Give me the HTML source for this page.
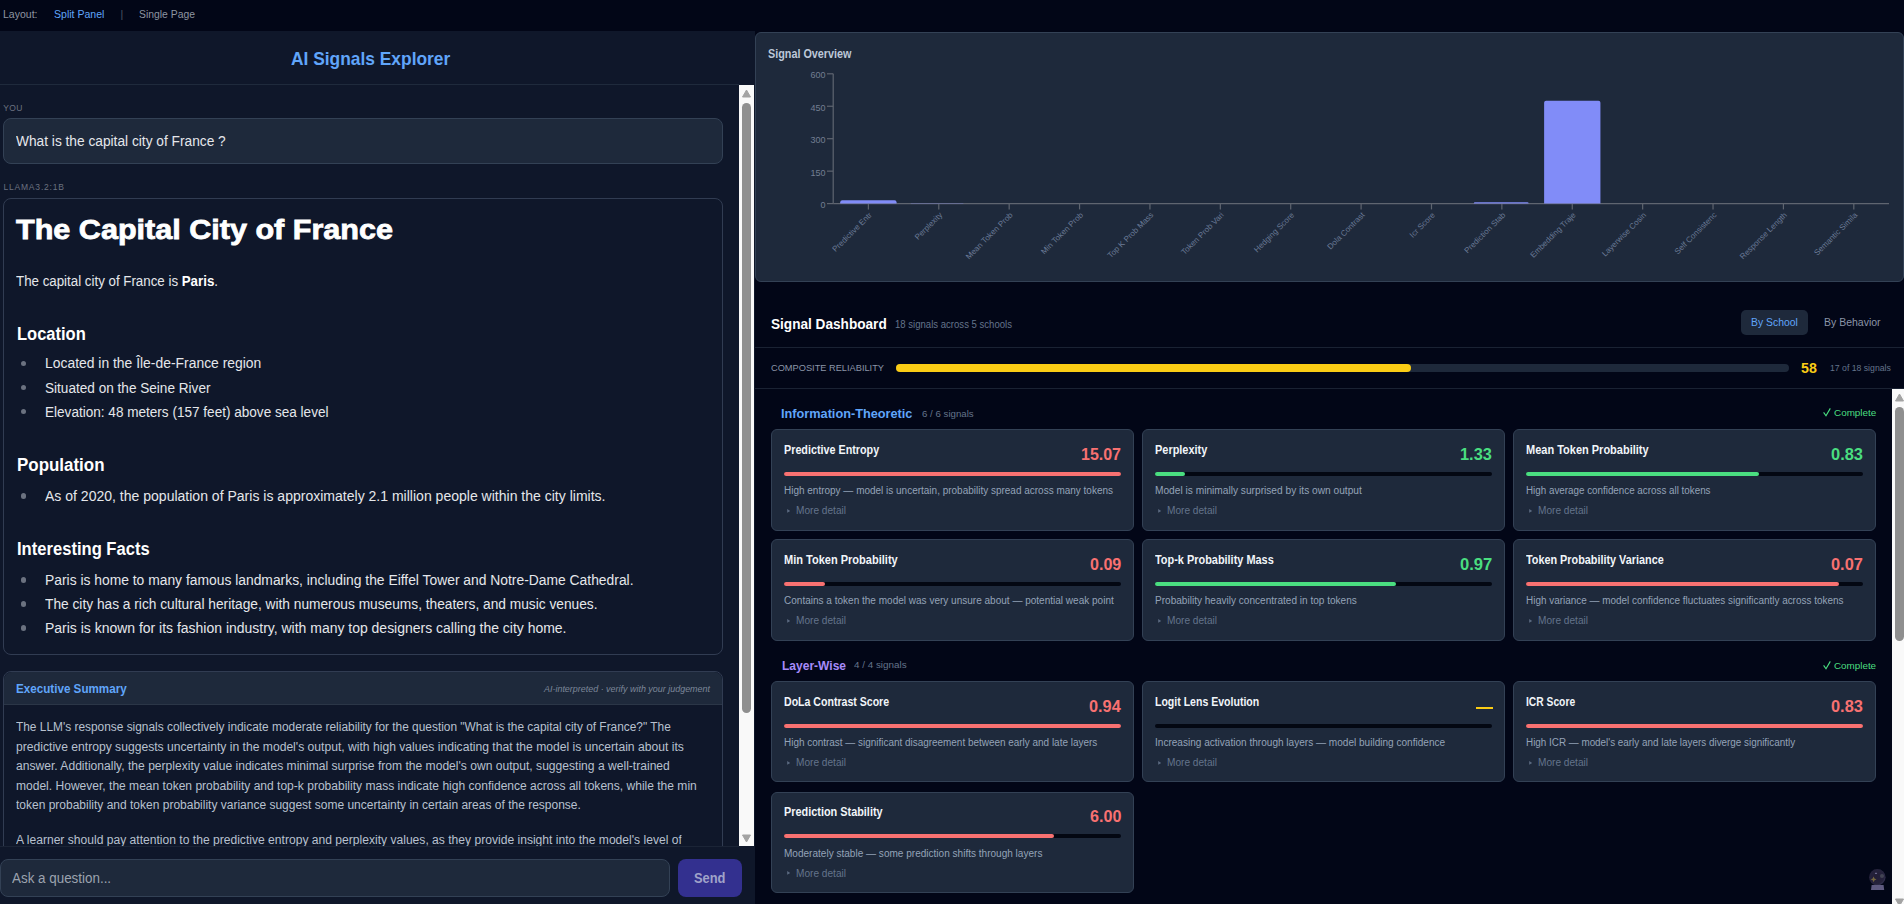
<!DOCTYPE html><html><head><meta charset="utf-8"><style>html,body{margin:0;padding:0}body{width:1904px;height:904px;overflow:hidden;position:relative;background:#020617;font-family:"Liberation Sans", sans-serif}.t{position:absolute;white-space:nowrap;transform-origin:0 50%}</style></head><body><div style="position:absolute;left:0px;top:0px;width:1904px;height:31px;background:#020617"></div><div style="position:absolute;left:0px;top:31px;width:755px;height:873px;background:#0f172a"></div><div style="position:absolute;left:0px;top:84px;width:739px;height:1px;background:#1f2a3c"></div><div style="position:absolute;left:3px;top:118px;width:720px;height:46px;background:#1e293b;border:1px solid #334155;border-radius:8px;box-sizing:border-box"></div><div style="position:absolute;left:3px;top:198px;width:720px;height:457px;border:1px solid #313c52;border-radius:8px;box-sizing:border-box"></div><div style="position:absolute;left:20.7px;top:360.8px;width:5.5px;height:5.5px;background:#6b7280;border-radius:50%"></div><div style="position:absolute;left:20.7px;top:384.90000000000003px;width:5.5px;height:5.5px;background:#6b7280;border-radius:50%"></div><div style="position:absolute;left:20.7px;top:408.90000000000003px;width:5.5px;height:5.5px;background:#6b7280;border-radius:50%"></div><div style="position:absolute;left:20.7px;top:493.1px;width:5.5px;height:5.5px;background:#6b7280;border-radius:50%"></div><div style="position:absolute;left:20.7px;top:577.1px;width:5.5px;height:5.5px;background:#6b7280;border-radius:50%"></div><div style="position:absolute;left:20.7px;top:601.1px;width:5.5px;height:5.5px;background:#6b7280;border-radius:50%"></div><div style="position:absolute;left:20.7px;top:625.1px;width:5.5px;height:5.5px;background:#6b7280;border-radius:50%"></div><div style="position:absolute;left:0;top:85px;width:739px;height:761px;overflow:hidden"><div style="position:absolute;left:3px;top:586px;width:720px;height:300px;border:1px solid #313c52;border-radius:8px;box-sizing:border-box;background:#0f172a"><div style="height:32px;background:#1e293b;border-bottom:1px solid #2b3647;border-radius:8px 8px 0 0"></div></div></div><div style="position:absolute;left:739px;top:85px;width:15px;height:761px;background:#f9f9f9"></div><svg style="position:absolute;left:739px;top:85px" width="15" height="761"><path d="M7.5 5 L11.5 12 L3.5 12 Z" fill="#a3a3a3" stroke="#a3a3a3" stroke-width="1" stroke-linejoin="round"/><rect x="3" y="18" width="9" height="610" rx="4.5" fill="#8f8f8f"/><path d="M3.5 750 L11.5 750 L7.5 757 Z" fill="#a3a3a3" stroke="#a3a3a3" stroke-width="1" stroke-linejoin="round"/></svg><div style="position:absolute;left:0px;top:859px;width:670px;height:38px;background:#1e293b;border:1px solid #334155;border-radius:8px;box-sizing:border-box"></div><div style="position:absolute;left:0px;top:846px;width:739px;height:1px;background:#1b2436"></div><div style="position:absolute;left:678px;top:859px;width:64px;height:38px;background:#33308f;border-radius:8px"></div><div style="position:absolute;left:755px;top:31px;width:1149px;height:873px;background:#020617"></div><div style="position:absolute;left:755px;top:32px;width:1149px;height:250px;background:#1e293b;border:1px solid #334155;border-radius:6px;box-sizing:border-box"></div><svg style="position:absolute;left:0;top:0" width="1904" height="290" viewBox="0 0 1904 290"><line x1="833.2" y1="73.7" x2="833.2" y2="203.6" stroke="#5f6570" stroke-width="1.2"/><line x1="827" y1="203.60" x2="833.2" y2="203.60" stroke="#5f6570" stroke-width="1.2"/><text x="825.5" y="208.20" text-anchor="end" font-family='"Liberation Sans", sans-serif' font-size="9" fill="#737e92">0</text><line x1="827" y1="171.15" x2="833.2" y2="171.15" stroke="#5f6570" stroke-width="1.2"/><text x="825.5" y="175.75" text-anchor="end" font-family='"Liberation Sans", sans-serif' font-size="9" fill="#737e92">150</text><line x1="827" y1="138.70" x2="833.2" y2="138.70" stroke="#5f6570" stroke-width="1.2"/><text x="825.5" y="143.30" text-anchor="end" font-family='"Liberation Sans", sans-serif' font-size="9" fill="#737e92">300</text><line x1="827" y1="106.25" x2="833.2" y2="106.25" stroke="#5f6570" stroke-width="1.2"/><text x="825.5" y="110.85" text-anchor="end" font-family='"Liberation Sans", sans-serif' font-size="9" fill="#737e92">450</text><line x1="827" y1="73.80" x2="833.2" y2="73.80" stroke="#5f6570" stroke-width="1.2"/><text x="825.5" y="78.40" text-anchor="end" font-family='"Liberation Sans", sans-serif' font-size="9" fill="#737e92">600</text><line x1="833.2" y1="203.6" x2="1889" y2="203.6" stroke="#5f6570" stroke-width="1.2"/><line x1="868.39" y1="203.6" x2="868.39" y2="209.4" stroke="#5f6570" stroke-width="1.2"/><path d="M840.24 203.6 v-1.26 q0 -2.00 2.00 -2.00 h52.31 q2.00 0 2.00 2.00 v1.26 z" fill="#818cf8"/><text transform="translate(872.39 215.5) rotate(-45)" text-anchor="end" font-family='"Liberation Sans", sans-serif' font-size="8" fill="#6a7a96">Predictive Entr</text><line x1="938.78" y1="203.6" x2="938.78" y2="209.4" stroke="#5f6570" stroke-width="1.2"/><path d="M910.63 203.6 v0.00 q0 -0.29 0.29 -0.29 h52.31 q0.29 0 0.29 0.29 v0.00 z" fill="#818cf8"/><text transform="translate(942.78 215.5) rotate(-45)" text-anchor="end" font-family='"Liberation Sans", sans-serif' font-size="8" fill="#6a7a96">Perplexity</text><line x1="1009.17" y1="203.6" x2="1009.17" y2="209.4" stroke="#5f6570" stroke-width="1.2"/><path d="M981.01 203.6 v0.00 q0 -0.18 0.18 -0.18 h52.31 q0.18 0 0.18 0.18 v0.00 z" fill="#818cf8"/><text transform="translate(1013.17 215.5) rotate(-45)" text-anchor="end" font-family='"Liberation Sans", sans-serif' font-size="8" fill="#6a7a96">Mean Token Prob</text><line x1="1079.55" y1="203.6" x2="1079.55" y2="209.4" stroke="#5f6570" stroke-width="1.2"/><text transform="translate(1083.55 215.5) rotate(-45)" text-anchor="end" font-family='"Liberation Sans", sans-serif' font-size="8" fill="#6a7a96">Min Token Prob</text><line x1="1149.94" y1="203.6" x2="1149.94" y2="209.4" stroke="#5f6570" stroke-width="1.2"/><path d="M1121.79 203.6 v0.00 q0 -0.21 0.21 -0.21 h52.31 q0.21 0 0.21 0.21 v0.00 z" fill="#818cf8"/><text transform="translate(1153.94 215.5) rotate(-45)" text-anchor="end" font-family='"Liberation Sans", sans-serif' font-size="8" fill="#6a7a96">Top K Prob Mass</text><line x1="1220.33" y1="203.6" x2="1220.33" y2="209.4" stroke="#5f6570" stroke-width="1.2"/><text transform="translate(1224.33 215.5) rotate(-45)" text-anchor="end" font-family='"Liberation Sans", sans-serif' font-size="8" fill="#6a7a96">Token Prob Vari</text><line x1="1290.71" y1="203.6" x2="1290.71" y2="209.4" stroke="#5f6570" stroke-width="1.2"/><text transform="translate(1294.71 215.5) rotate(-45)" text-anchor="end" font-family='"Liberation Sans", sans-serif' font-size="8" fill="#6a7a96">Hedging Score</text><line x1="1361.10" y1="203.6" x2="1361.10" y2="209.4" stroke="#5f6570" stroke-width="1.2"/><path d="M1332.95 203.6 v0.00 q0 -0.20 0.20 -0.20 h52.31 q0.20 0 0.20 0.20 v0.00 z" fill="#818cf8"/><text transform="translate(1365.10 215.5) rotate(-45)" text-anchor="end" font-family='"Liberation Sans", sans-serif' font-size="8" fill="#6a7a96">Dola Contrast</text><line x1="1431.49" y1="203.6" x2="1431.49" y2="209.4" stroke="#5f6570" stroke-width="1.2"/><path d="M1403.33 203.6 v0.00 q0 -0.18 0.18 -0.18 h52.31 q0.18 0 0.18 0.18 v0.00 z" fill="#818cf8"/><text transform="translate(1435.49 215.5) rotate(-45)" text-anchor="end" font-family='"Liberation Sans", sans-serif' font-size="8" fill="#6a7a96">Icr Score</text><line x1="1501.87" y1="203.6" x2="1501.87" y2="209.4" stroke="#5f6570" stroke-width="1.2"/><path d="M1473.72 203.6 v0.00 q0 -1.30 1.30 -1.30 h52.31 q1.30 0 1.30 1.30 v0.00 z" fill="#818cf8"/><text transform="translate(1505.87 215.5) rotate(-45)" text-anchor="end" font-family='"Liberation Sans", sans-serif' font-size="8" fill="#6a7a96">Prediction Stab</text><line x1="1572.26" y1="203.6" x2="1572.26" y2="209.4" stroke="#5f6570" stroke-width="1.2"/><path d="M1544.11 203.6 v-100.76 q0 -2.00 2.00 -2.00 h52.31 q2.00 0 2.00 2.00 v100.76 z" fill="#818cf8"/><text transform="translate(1576.26 215.5) rotate(-45)" text-anchor="end" font-family='"Liberation Sans", sans-serif' font-size="8" fill="#6a7a96">Embedding Traje</text><line x1="1642.65" y1="203.6" x2="1642.65" y2="209.4" stroke="#5f6570" stroke-width="1.2"/><text transform="translate(1646.65 215.5) rotate(-45)" text-anchor="end" font-family='"Liberation Sans", sans-serif' font-size="8" fill="#6a7a96">Layerwise Cosin</text><line x1="1713.03" y1="203.6" x2="1713.03" y2="209.4" stroke="#5f6570" stroke-width="1.2"/><text transform="translate(1717.03 215.5) rotate(-45)" text-anchor="end" font-family='"Liberation Sans", sans-serif' font-size="8" fill="#6a7a96">Self Consistenc</text><line x1="1783.42" y1="203.6" x2="1783.42" y2="209.4" stroke="#5f6570" stroke-width="1.2"/><text transform="translate(1787.42 215.5) rotate(-45)" text-anchor="end" font-family='"Liberation Sans", sans-serif' font-size="8" fill="#6a7a96">Response Length</text><line x1="1853.81" y1="203.6" x2="1853.81" y2="209.4" stroke="#5f6570" stroke-width="1.2"/><text transform="translate(1857.81 215.5) rotate(-45)" text-anchor="end" font-family='"Liberation Sans", sans-serif' font-size="8" fill="#6a7a96">Semantic Simila</text></svg><div style="position:absolute;left:1741px;top:310px;width:67px;height:25px;background:#1e293b;border-radius:5px"></div><div style="position:absolute;left:755px;top:347px;width:1149px;height:1px;background:#1a2233"></div><div style="position:absolute;left:896px;top:364px;width:893px;height:8px;background:#1e293b;border-radius:4px"></div><div style="position:absolute;left:896px;top:364px;width:515px;height:8px;background:#facc15;border-radius:4px"></div><div style="position:absolute;left:755px;top:388px;width:1149px;height:1px;background:#1a2233"></div><svg style="position:absolute;left:1822px;top:407px" width="10" height="10"><path d="M1.6 5.4 L4 8.8 L8.3 1.4" fill="none" stroke="#4ade80" stroke-width="1.1"/></svg><svg style="position:absolute;left:1822px;top:660.4px" width="10" height="10"><path d="M1.6 5.4 L4 8.8 L8.3 1.4" fill="none" stroke="#4ade80" stroke-width="1.1"/></svg><div style="position:absolute;left:771px;top:429.3px;width:363px;height:101.30000000000001px;background:#1e293b;border:1px solid #334155;border-radius:6px;box-sizing:border-box"></div><div style="position:absolute;left:784px;top:471.8px;width:337px;height:4.199999999999989px;background:#030712;border-radius:2px"></div><div style="position:absolute;left:784px;top:471.8px;width:337.0px;height:4.199999999999989px;background:#f87171;border-radius:2px"></div><svg style="position:absolute;left:785.5px;top:507.0px" width="6" height="8"><path d="M1.2 2 L4.2 3.9 L1.2 5.8 Z" fill="#5b6a80"/></svg><div style="position:absolute;left:1142px;top:429.3px;width:363px;height:101.30000000000001px;background:#1e293b;border:1px solid #334155;border-radius:6px;box-sizing:border-box"></div><div style="position:absolute;left:1155px;top:471.8px;width:337px;height:4.199999999999989px;background:#030712;border-radius:2px"></div><div style="position:absolute;left:1155px;top:471.8px;width:30.0px;height:4.199999999999989px;background:#4ade80;border-radius:2px"></div><svg style="position:absolute;left:1156.5px;top:507.0px" width="6" height="8"><path d="M1.2 2 L4.2 3.9 L1.2 5.8 Z" fill="#5b6a80"/></svg><div style="position:absolute;left:1513px;top:429.3px;width:363px;height:101.30000000000001px;background:#1e293b;border:1px solid #334155;border-radius:6px;box-sizing:border-box"></div><div style="position:absolute;left:1526px;top:471.8px;width:337px;height:4.199999999999989px;background:#030712;border-radius:2px"></div><div style="position:absolute;left:1526px;top:471.8px;width:233.0px;height:4.199999999999989px;background:#4ade80;border-radius:2px"></div><svg style="position:absolute;left:1527.5px;top:507.0px" width="6" height="8"><path d="M1.2 2 L4.2 3.9 L1.2 5.8 Z" fill="#5b6a80"/></svg><div style="position:absolute;left:771px;top:539.3px;width:363px;height:101.29999999999995px;background:#1e293b;border:1px solid #334155;border-radius:6px;box-sizing:border-box"></div><div style="position:absolute;left:784px;top:581.8px;width:337px;height:4.2000000000000455px;background:#030712;border-radius:2px"></div><div style="position:absolute;left:784px;top:581.8px;width:41.0px;height:4.2000000000000455px;background:#f87171;border-radius:2px"></div><svg style="position:absolute;left:785.5px;top:617.0px" width="6" height="8"><path d="M1.2 2 L4.2 3.9 L1.2 5.8 Z" fill="#5b6a80"/></svg><div style="position:absolute;left:1142px;top:539.3px;width:363px;height:101.29999999999995px;background:#1e293b;border:1px solid #334155;border-radius:6px;box-sizing:border-box"></div><div style="position:absolute;left:1155px;top:581.8px;width:337px;height:4.2000000000000455px;background:#030712;border-radius:2px"></div><div style="position:absolute;left:1155px;top:581.8px;width:241.0px;height:4.2000000000000455px;background:#4ade80;border-radius:2px"></div><svg style="position:absolute;left:1156.5px;top:617.0px" width="6" height="8"><path d="M1.2 2 L4.2 3.9 L1.2 5.8 Z" fill="#5b6a80"/></svg><div style="position:absolute;left:1513px;top:539.3px;width:363px;height:101.29999999999995px;background:#1e293b;border:1px solid #334155;border-radius:6px;box-sizing:border-box"></div><div style="position:absolute;left:1526px;top:581.8px;width:337px;height:4.2000000000000455px;background:#030712;border-radius:2px"></div><div style="position:absolute;left:1526px;top:581.8px;width:312.70000000000005px;height:4.2000000000000455px;background:#f87171;border-radius:2px"></div><svg style="position:absolute;left:1527.5px;top:617.0px" width="6" height="8"><path d="M1.2 2 L4.2 3.9 L1.2 5.8 Z" fill="#5b6a80"/></svg><div style="position:absolute;left:771px;top:681px;width:363px;height:101.29999999999995px;background:#1e293b;border:1px solid #334155;border-radius:6px;box-sizing:border-box"></div><div style="position:absolute;left:784px;top:723.5px;width:337px;height:4.2000000000000455px;background:#030712;border-radius:2px"></div><div style="position:absolute;left:784px;top:723.5px;width:337.0px;height:4.2000000000000455px;background:#f87171;border-radius:2px"></div><svg style="position:absolute;left:785.5px;top:758.7px" width="6" height="8"><path d="M1.2 2 L4.2 3.9 L1.2 5.8 Z" fill="#5b6a80"/></svg><div style="position:absolute;left:1142px;top:681px;width:363px;height:101.29999999999995px;background:#1e293b;border:1px solid #334155;border-radius:6px;box-sizing:border-box"></div><div style="position:absolute;left:1476px;top:706.5px;width:16.5px;height:2.5px;background:#facc15"></div><div style="position:absolute;left:1155px;top:723.5px;width:337px;height:4.2000000000000455px;background:#030712;border-radius:2px"></div><svg style="position:absolute;left:1156.5px;top:758.7px" width="6" height="8"><path d="M1.2 2 L4.2 3.9 L1.2 5.8 Z" fill="#5b6a80"/></svg><div style="position:absolute;left:1513px;top:681px;width:363px;height:101.29999999999995px;background:#1e293b;border:1px solid #334155;border-radius:6px;box-sizing:border-box"></div><div style="position:absolute;left:1526px;top:723.5px;width:337px;height:4.2000000000000455px;background:#030712;border-radius:2px"></div><div style="position:absolute;left:1526px;top:723.5px;width:337.0px;height:4.2000000000000455px;background:#f87171;border-radius:2px"></div><svg style="position:absolute;left:1527.5px;top:758.7px" width="6" height="8"><path d="M1.2 2 L4.2 3.9 L1.2 5.8 Z" fill="#5b6a80"/></svg><div style="position:absolute;left:771px;top:791.6px;width:363px;height:101.29999999999995px;background:#1e293b;border:1px solid #334155;border-radius:6px;box-sizing:border-box"></div><div style="position:absolute;left:784px;top:834.1px;width:337px;height:4.199999999999932px;background:#030712;border-radius:2px"></div><div style="position:absolute;left:784px;top:834.1px;width:269.5999999999999px;height:4.199999999999932px;background:#f87171;border-radius:2px"></div><svg style="position:absolute;left:785.5px;top:869.3px" width="6" height="8"><path d="M1.2 2 L4.2 3.9 L1.2 5.8 Z" fill="#5b6a80"/></svg><div style="position:absolute;left:1892px;top:389px;width:15px;height:521px;background:#f9f9f9"></div><svg style="position:absolute;left:1892px;top:389px" width="15" height="521"><path d="M7.5 5 L11.5 12 L3.5 12 Z" fill="#a3a3a3" stroke="#a3a3a3" stroke-width="1" stroke-linejoin="round"/><rect x="3" y="18" width="9" height="234" rx="4.5" fill="#8f8f8f"/><path d="M3.5 510 L11.5 510 L7.5 517 Z" fill="#a3a3a3" stroke="#a3a3a3" stroke-width="1" stroke-linejoin="round"/></svg><svg style="position:absolute;left:1866px;top:866px" width="24" height="26"><defs><radialGradient id="cb" cx="0.45" cy="0.45" r="0.6"><stop offset="0" stop-color="#221d35"/><stop offset="0.75" stop-color="#25223c"/><stop offset="1" stop-color="#3a3858"/></radialGradient></defs><circle cx="11.3" cy="11.3" r="8.2" fill="url(#cb)"/><circle cx="16" cy="10" r="2" fill="#4a4e5a" opacity="0.8"/><path d="M5.6 19 h12 l0.6 5 h-13.2 z" fill="#5e5a80"/><path d="M7.6 10.5 l0.9 2 l2 0.9 l-2 0.9 l-0.9 2 l-0.9 -2 l-2 -0.9 l2 -0.9 z" fill="#75673f"/><path d="M10 6.2 l1.2 1.8 h-2.4 z" fill="#7c7aa0"/></svg><div class="t" style="left:3.30px;top:9.01px;font-size:10.5px;line-height:10.5px;color:#8e95a1;font-weight:400;transform:scaleX(1.0014);">Layout:</div><div class="t" style="left:53.80px;top:9.01px;font-size:10.5px;line-height:10.5px;color:#60a5fa;font-weight:400;transform:scaleX(1.0039);">Split Panel</div><div class="t" style="left:120.50px;top:9.01px;font-size:10.5px;line-height:10.5px;color:#4b5563;font-weight:400;">|</div><div class="t" style="left:139.00px;top:9.01px;font-size:10.5px;line-height:10.5px;color:#8e95a1;font-weight:400;transform:scaleX(0.9887);">Single Page</div><div class="t" style="left:290.75px;top:49.42px;font-size:19px;line-height:19px;color:#60a5fa;font-weight:700;transform:scaleX(0.9140);">AI Signals Explorer</div><div class="t" style="left:3.30px;top:103.70px;font-size:8.5px;line-height:8.5px;color:#6b7280;font-weight:400;letter-spacing:0.289px;">YOU</div><div class="t" style="left:16.30px;top:134.05px;font-size:14px;line-height:14px;color:#e5e7eb;font-weight:400;transform:scaleX(0.9800);">What is the capital city of France ?</div><div class="t" style="left:3.40px;top:183.20px;font-size:8.5px;line-height:8.5px;color:#6b7280;font-weight:400;letter-spacing:0.815px;">LLAMA3.2:1B</div><div class="t" style="left:16.00px;top:215.80px;font-size:28px;line-height:28px;color:#ffffff;font-weight:700;transform:scaleX(1.0915);-webkit-text-stroke:0.8px #fff;">The Capital City of France</div><div class="t" style="left:16.00px;top:273.65px;font-size:14px;line-height:14px;color:#e5e7eb;font-weight:400;transform:scaleX(0.9509);">The capital city of France is <b style="color:#fff">Paris</b>.</div><div class="t" style="left:16.60px;top:324.86px;font-size:18px;line-height:18px;color:#ffffff;font-weight:700;transform:scaleX(0.9173);">Location</div><div class="t" style="left:44.50px;top:356.45px;font-size:14px;line-height:14px;color:#e5e7eb;font-weight:400;transform:scaleX(0.9926);">Located in the Île-de-France region</div><div class="t" style="left:44.50px;top:380.55px;font-size:14px;line-height:14px;color:#e5e7eb;font-weight:400;transform:scaleX(0.9709);">Situated on the Seine River</div><div class="t" style="left:44.50px;top:404.55px;font-size:14px;line-height:14px;color:#e5e7eb;font-weight:400;transform:scaleX(0.9688);">Elevation: 48 meters (157 feet) above sea level</div><div class="t" style="left:16.50px;top:455.76px;font-size:18px;line-height:18px;color:#ffffff;font-weight:700;transform:scaleX(0.9409);">Population</div><div class="t" style="left:44.50px;top:488.75px;font-size:14px;line-height:14px;color:#e5e7eb;font-weight:400;transform:scaleX(1.0018);">As of 2020, the population of Paris is approximately 2.1 million people within the city limits.</div><div class="t" style="left:16.50px;top:540.16px;font-size:18px;line-height:18px;color:#ffffff;font-weight:700;transform:scaleX(0.9212);">Interesting Facts</div><div class="t" style="left:44.50px;top:572.75px;font-size:14px;line-height:14px;color:#e5e7eb;font-weight:400;transform:scaleX(0.9895);">Paris is home to many famous landmarks, including the Eiffel Tower and Notre-Dame Cathedral.</div><div class="t" style="left:44.50px;top:596.75px;font-size:14px;line-height:14px;color:#e5e7eb;font-weight:400;transform:scaleX(0.9807);">The city has a rich cultural heritage, with numerous museums, theaters, and music venues.</div><div class="t" style="left:44.50px;top:620.75px;font-size:14px;line-height:14px;color:#e5e7eb;font-weight:400;transform:scaleX(0.9978);">Paris is known for its fashion industry, with many top designers calling the city home.</div><div class="t" style="left:16.20px;top:683.32px;font-size:12.5px;line-height:12.5px;color:#60a5fa;font-weight:700;transform:scaleX(0.9317);">Executive Summary</div><div class="t" style="left:544.00px;top:683.86px;font-size:9.5px;line-height:9.5px;color:#7c8799;font-weight:400;font-style:italic;transform:scaleX(0.9413);">AI-interpreted · verify with your judgement</div><div class="t" style="left:16.20px;top:721.32px;font-size:12.5px;line-height:12.5px;color:#b8c1cf;font-weight:400;transform:scaleX(0.9511);">The LLM&#x27;s response signals collectively indicate moderate reliability for the question &quot;What is the capital city of France?&quot; The</div><div class="t" style="left:16.20px;top:740.82px;font-size:12.5px;line-height:12.5px;color:#b8c1cf;font-weight:400;transform:scaleX(0.9704);">predictive entropy suggests uncertainty in the model&#x27;s output, with high values indicating that the model is uncertain about its</div><div class="t" style="left:16.20px;top:760.32px;font-size:12.5px;line-height:12.5px;color:#b8c1cf;font-weight:400;transform:scaleX(0.9670);">answer. Additionally, the perplexity value indicates minimal surprise from the model&#x27;s own output, suggesting a well-trained</div><div class="t" style="left:16.20px;top:779.82px;font-size:12.5px;line-height:12.5px;color:#b8c1cf;font-weight:400;transform:scaleX(0.9634);">model. However, the mean token probability and top-k probability mass indicate high confidence across all tokens, while the min</div><div class="t" style="left:16.20px;top:799.32px;font-size:12.5px;line-height:12.5px;color:#b8c1cf;font-weight:400;transform:scaleX(0.9597);">token probability and token probability variance suggest some uncertainty in certain areas of the response.</div><div class="t" style="left:16.20px;top:833.82px;font-size:12.5px;line-height:12.5px;color:#b8c1cf;font-weight:400;transform:scaleX(0.9674);height:12.18px;overflow:hidden;line-height:12.5px;">A learner should pay attention to the predictive entropy and perplexity values, as they provide insight into the model&#x27;s level of</div><div class="t" style="left:12.10px;top:871.05px;font-size:14px;line-height:14px;color:#9ca3af;font-weight:400;transform:scaleX(0.9573);">Ask a question...</div><div class="t" style="left:694.00px;top:871.05px;font-size:14px;line-height:14px;color:#a0a3c9;font-weight:700;transform:scaleX(0.9201);">Send</div><div class="t" style="left:768.00px;top:47.94px;font-size:12px;line-height:12px;color:#bcc7d8;font-weight:700;transform:scaleX(0.9006);">Signal Overview</div><div class="t" style="left:770.70px;top:317.03px;font-size:14.5px;line-height:14.5px;color:#ffffff;font-weight:700;transform:scaleX(0.9385);">Signal Dashboard</div><div class="t" style="left:895.00px;top:320.13px;font-size:10px;line-height:10px;color:#64748b;font-weight:400;transform:scaleX(0.9567);">18 signals across 5 schools</div><div class="t" style="left:1751.00px;top:317.09px;font-size:11px;line-height:11px;color:#60a5fa;font-weight:400;transform:scaleX(0.9449);">By School</div><div class="t" style="left:1824.40px;top:317.09px;font-size:11px;line-height:11px;color:#8b95a8;font-weight:400;transform:scaleX(0.9543);">By Behavior</div><div class="t" style="left:771.00px;top:363.26px;font-size:9.5px;line-height:9.5px;color:#8b95a8;font-weight:400;transform:scaleX(0.9730);">COMPOSITE RELIABILITY</div><div class="t" style="left:1801.40px;top:360.85px;font-size:14px;line-height:14px;color:#facc15;font-weight:700;transform:scaleX(1.0142);">58</div><div class="t" style="left:1830.00px;top:363.06px;font-size:9.5px;line-height:9.5px;color:#64748b;font-weight:400;transform:scaleX(0.9136);">17 of 18 signals</div><div class="t" style="left:781.40px;top:408.02px;font-size:12.5px;line-height:12.5px;color:#60a5fa;font-weight:700;transform:scaleX(1.0172);">Information-Theoretic</div><div class="t" style="left:921.80px;top:408.56px;font-size:9.5px;line-height:9.5px;color:#64748b;font-weight:400;transform:scaleX(1.0197);">6 / 6 signals</div><div class="t" style="left:1833.70px;top:407.86px;font-size:9.5px;line-height:9.5px;color:#4ade80;font-weight:400;transform:scaleX(1.0400);">Complete</div><div class="t" style="left:781.50px;top:659.52px;font-size:12.5px;line-height:12.5px;color:#a78bfa;font-weight:700;transform:scaleX(0.9611);">Layer-Wise</div><div class="t" style="left:853.60px;top:660.36px;font-size:9.5px;line-height:9.5px;color:#64748b;font-weight:400;transform:scaleX(1.0374);">4 / 4 signals</div><div class="t" style="left:1833.70px;top:661.26px;font-size:9.5px;line-height:9.5px;color:#4ade80;font-weight:400;transform:scaleX(1.0351);">Complete</div><div class="t" style="left:784.20px;top:444.14px;font-size:12px;line-height:12px;color:#f1f5f9;font-weight:700;transform:scaleX(0.8978);">Predictive Entropy</div><div class="t" style="left:1081.00px;top:446.86px;font-size:16px;line-height:16px;color:#f87171;font-weight:700;transform:scaleX(0.9988);">15.07</div><div class="t" style="left:784.20px;top:486.44px;font-size:10px;line-height:10px;color:#94a3b8;font-weight:400;transform:scaleX(0.9982);">High entropy — model is uncertain, probability spread across many tokens</div><div class="t" style="left:795.60px;top:506.44px;font-size:10px;line-height:10px;color:#64748b;font-weight:400;transform:scaleX(1.0107);">More detail</div><div class="t" style="left:1155.20px;top:444.14px;font-size:12px;line-height:12px;color:#f1f5f9;font-weight:700;transform:scaleX(0.9115);">Perplexity</div><div class="t" style="left:1460.20px;top:446.86px;font-size:16px;line-height:16px;color:#4ade80;font-weight:700;transform:scaleX(1.0212);">1.33</div><div class="t" style="left:1155.20px;top:486.44px;font-size:10px;line-height:10px;color:#94a3b8;font-weight:400;transform:scaleX(1.0166);">Model is minimally surprised by its own output</div><div class="t" style="left:1166.60px;top:506.44px;font-size:10px;line-height:10px;color:#64748b;font-weight:400;transform:scaleX(1.0107);">More detail</div><div class="t" style="left:1526.20px;top:444.14px;font-size:12px;line-height:12px;color:#f1f5f9;font-weight:700;transform:scaleX(0.9162);">Mean Token Probability</div><div class="t" style="left:1831.00px;top:446.86px;font-size:16px;line-height:16px;color:#4ade80;font-weight:700;transform:scaleX(1.0276);">0.83</div><div class="t" style="left:1526.20px;top:486.44px;font-size:10px;line-height:10px;color:#94a3b8;font-weight:400;transform:scaleX(0.9820);">High average confidence across all tokens</div><div class="t" style="left:1537.60px;top:506.44px;font-size:10px;line-height:10px;color:#64748b;font-weight:400;transform:scaleX(1.0107);">More detail</div><div class="t" style="left:784.20px;top:554.14px;font-size:12px;line-height:12px;color:#f1f5f9;font-weight:700;transform:scaleX(0.9184);">Min Token Probability</div><div class="t" style="left:1089.70px;top:556.86px;font-size:16px;line-height:16px;color:#f87171;font-weight:700;transform:scaleX(1.0051);">0.09</div><div class="t" style="left:784.20px;top:596.43px;font-size:10px;line-height:10px;color:#94a3b8;font-weight:400;transform:scaleX(1.0021);">Contains a token the model was very unsure about — potential weak point</div><div class="t" style="left:795.60px;top:616.43px;font-size:10px;line-height:10px;color:#64748b;font-weight:400;transform:scaleX(1.0107);">More detail</div><div class="t" style="left:1155.20px;top:554.14px;font-size:12px;line-height:12px;color:#f1f5f9;font-weight:700;transform:scaleX(0.9098);">Top-k Probability Mass</div><div class="t" style="left:1459.70px;top:556.86px;font-size:16px;line-height:16px;color:#4ade80;font-weight:700;transform:scaleX(1.0372);">0.97</div><div class="t" style="left:1155.20px;top:596.43px;font-size:10px;line-height:10px;color:#94a3b8;font-weight:400;transform:scaleX(1.0055);">Probability heavily concentrated in top tokens</div><div class="t" style="left:1166.60px;top:616.43px;font-size:10px;line-height:10px;color:#64748b;font-weight:400;transform:scaleX(1.0107);">More detail</div><div class="t" style="left:1526.20px;top:554.14px;font-size:12px;line-height:12px;color:#f1f5f9;font-weight:700;transform:scaleX(0.9030);">Token Probability Variance</div><div class="t" style="left:1831.20px;top:556.86px;font-size:16px;line-height:16px;color:#f87171;font-weight:700;transform:scaleX(1.0212);">0.07</div><div class="t" style="left:1526.20px;top:596.43px;font-size:10px;line-height:10px;color:#94a3b8;font-weight:400;transform:scaleX(0.9931);">High variance — model confidence fluctuates significantly across tokens</div><div class="t" style="left:1537.60px;top:616.43px;font-size:10px;line-height:10px;color:#64748b;font-weight:400;transform:scaleX(1.0107);">More detail</div><div class="t" style="left:784.20px;top:695.84px;font-size:12px;line-height:12px;color:#f1f5f9;font-weight:700;transform:scaleX(0.8805);">DoLa Contrast Score</div><div class="t" style="left:1089.30px;top:698.56px;font-size:16px;line-height:16px;color:#f87171;font-weight:700;transform:scaleX(1.0180);">0.94</div><div class="t" style="left:784.20px;top:738.13px;font-size:10px;line-height:10px;color:#94a3b8;font-weight:400;transform:scaleX(0.9937);">High contrast — significant disagreement between early and late layers</div><div class="t" style="left:795.60px;top:758.13px;font-size:10px;line-height:10px;color:#64748b;font-weight:400;transform:scaleX(1.0107);">More detail</div><div class="t" style="left:1155.20px;top:695.84px;font-size:12px;line-height:12px;color:#f1f5f9;font-weight:700;transform:scaleX(0.8781);">Logit Lens Evolution</div><div class="t" style="left:1155.20px;top:738.13px;font-size:10px;line-height:10px;color:#94a3b8;font-weight:400;transform:scaleX(1.0055);">Increasing activation through layers — model building confidence</div><div class="t" style="left:1166.60px;top:758.13px;font-size:10px;line-height:10px;color:#64748b;font-weight:400;transform:scaleX(1.0107);">More detail</div><div class="t" style="left:1526.20px;top:695.84px;font-size:12px;line-height:12px;color:#f1f5f9;font-weight:700;transform:scaleX(0.8560);">ICR Score</div><div class="t" style="left:1831.20px;top:698.56px;font-size:16px;line-height:16px;color:#f87171;font-weight:700;transform:scaleX(1.0212);">0.83</div><div class="t" style="left:1526.20px;top:738.13px;font-size:10px;line-height:10px;color:#94a3b8;font-weight:400;transform:scaleX(0.9872);">High ICR — model&#x27;s early and late layers diverge significantly</div><div class="t" style="left:1537.60px;top:758.13px;font-size:10px;line-height:10px;color:#64748b;font-weight:400;transform:scaleX(1.0107);">More detail</div><div class="t" style="left:784.20px;top:806.44px;font-size:12px;line-height:12px;color:#f1f5f9;font-weight:700;transform:scaleX(0.9072);">Prediction Stability</div><div class="t" style="left:1089.60px;top:809.16px;font-size:16px;line-height:16px;color:#f87171;font-weight:700;transform:scaleX(1.0083);">6.00</div><div class="t" style="left:784.20px;top:848.73px;font-size:10px;line-height:10px;color:#94a3b8;font-weight:400;transform:scaleX(1.0041);">Moderately stable — some prediction shifts through layers</div><div class="t" style="left:795.60px;top:868.73px;font-size:10px;line-height:10px;color:#64748b;font-weight:400;transform:scaleX(1.0107);">More detail</div></body></html>
